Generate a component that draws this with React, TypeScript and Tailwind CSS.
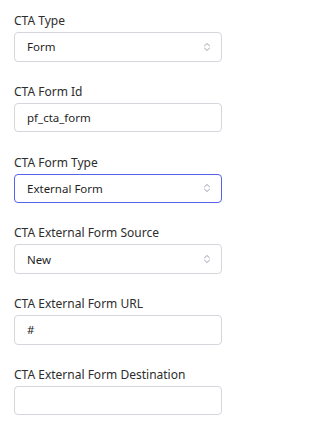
import React from "react";

function Chevrons() {
  return (
    <svg width="8" height="10" viewBox="0 0 8 10" fill="none" className="shrink-0">
      <path d="M1.5 3.8 L4 1.5 L6.5 3.8" stroke="#9ca3af" strokeWidth="1" strokeLinecap="round" strokeLinejoin="round" />
      <path d="M1.5 6.2 L4 8.5 L6.5 6.2" stroke="#9ca3af" strokeWidth="1" strokeLinecap="round" strokeLinejoin="round" />
    </svg>
  );
}

function Field({
  label,
  value,
  select,
  focused,
}: {
  label: string;
  value: string;
  select?: boolean;
  focused?: boolean;
}) {
  return (
    <div className="flex flex-col">
      <div className="text-[12px] leading-[20px] text-[#2d2d2d]">{label}</div>
      <div
        className={
          focused
            ? "mt-px flex h-[29.5px] items-center justify-between rounded-[4px] border border-[#5662e8] bg-white pl-3 pr-[10px]"
            : "mt-px flex h-[29.5px] items-center justify-between rounded-[4px] border border-[#d3d6da] bg-white pl-3 pr-[10px]"
        }
      >
        <span className="text-[11.5px] text-[#1f1f1f]">{value}</span>
        {select && <Chevrons />}
      </div>
    </div>
  );
}

export default function App() {
  return (
    <div
      className="min-h-[432px] w-[231px] bg-white pl-[14px] pr-[9px] pt-[11px]"
      style={{ fontFamily: '"Noto Sans", "Open Sans", sans-serif' }}
    >
      <div className="flex flex-col gap-[20.3px]">
        <Field label="CTA Type" value="Form" select />
        <Field label="CTA Form Id" value="pf_cta_form" />
        <Field label="CTA Form Type" value="External Form" select focused />
        <Field label="CTA External Form Source" value="New" select />
        <Field label="CTA External Form URL" value="#" />
        <Field label="CTA External Form Destination" value="" />
      </div>
    </div>
  );
}
